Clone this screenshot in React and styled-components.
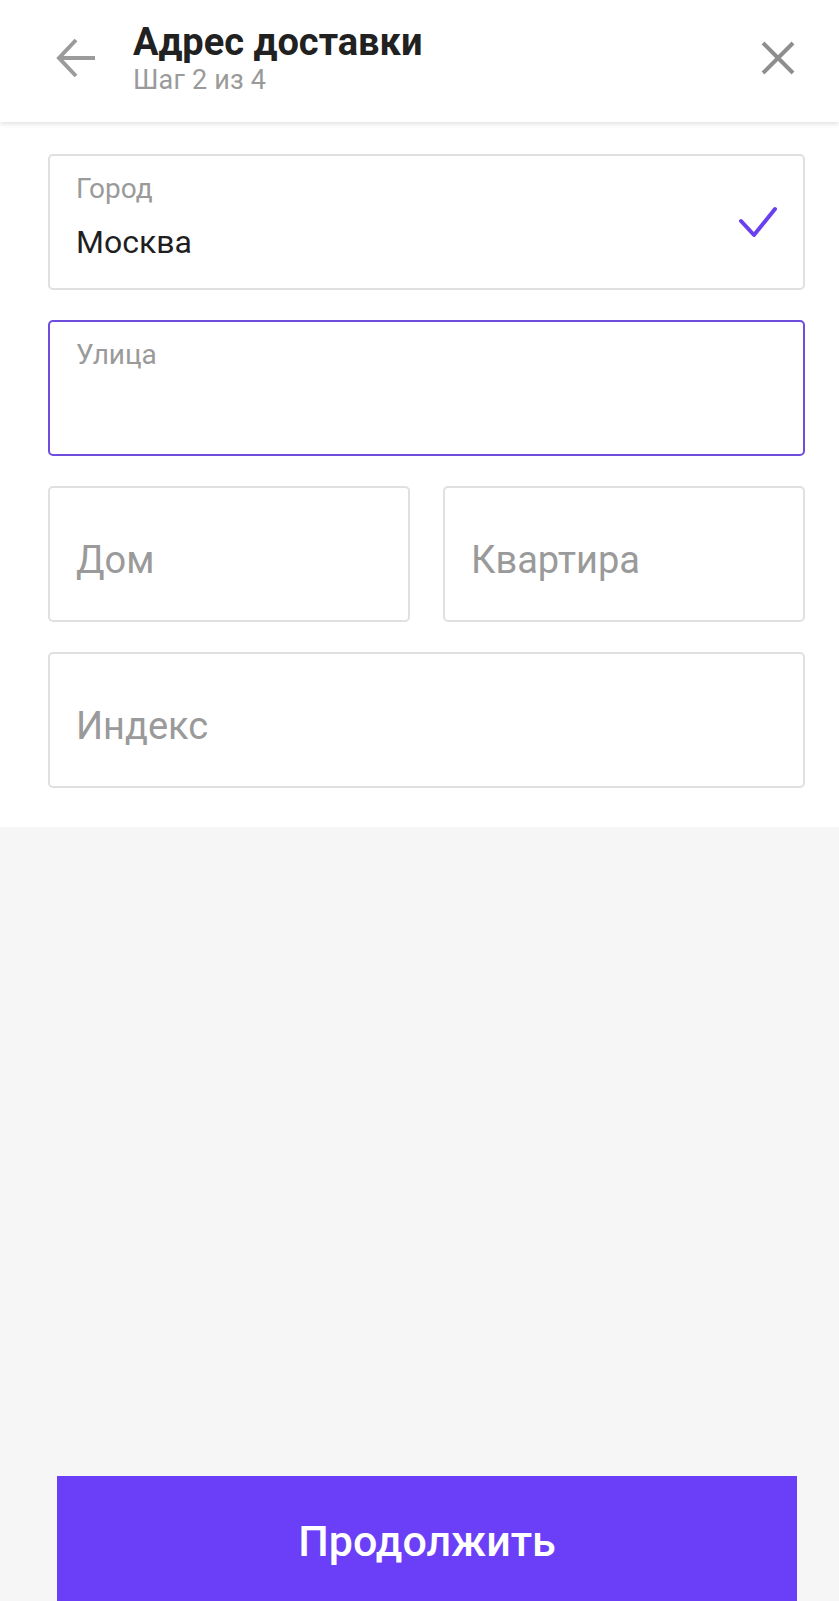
import styled, { createGlobalStyle } from "styled-components";

const GlobalStyle = createGlobalStyle`
  body {
    margin: 0;
    background: #f6f6f6;
    font-family: Roboto, "Liberation Sans", sans-serif;
  }
  * { box-sizing: border-box; }
`

const Page = styled.div`
  display: flex;
  flex-direction: column;
  min-height: 100vh;
  background: #f6f6f6;
`
const Header = styled.header`
  position: relative;
  z-index: 1;
  height: 122px;
  display: flex;
  align-items: flex-start;
  background: #fff;
  box-shadow: 0 2px 5px rgba(0, 0, 0, 0.12);
`
const IconButton = styled.button`
  border: none;
  background: none;
  padding: 0;
  display: flex;
  align-items: center;
  justify-content: center;
  width: ${p => p.$size}px;
  height: ${p => p.$size}px;
  margin: ${p => p.$margin};
  cursor: pointer;
`
const Titles = styled.div`
  flex: 1;
  padding-top: 20px;
  margin-left: 37px;
`
const Title = styled.h1`
  margin: 0;
  font-size: 38px;
  line-height: 44px;
  font-weight: 700;
  color: #212121;
`
const Subtitle = styled.div`
  font-size: 27px;
  line-height: 32px;
  letter-spacing: 0.2px;
  color: #9a9a9a;
`
const Form = styled.section`
  background: #fff;
  padding: 32px 34px 39px 48px;
  display: grid;
  grid-template-columns: 1fr 1fr;
  gap: 30px 33px;
`
const Field = styled.label`
  grid-column: ${p => (p.$wide ? "1 / 3" : "auto")};
  height: 136px;
  border: 2px solid ${p => (p.$focused ? "#6f4ddc" : "#e0e0e0")};
  border-radius: 5px;
  padding: 0 26px 0 26px;
  display: flex;
  align-items: ${p => (p.$empty ? "center" : "flex-start")};
  background: #fff;
`
const FieldBody = styled.div`
  flex: 1;
  padding-top: ${p => (p.$empty ? "12px" : "16px")};
`
const Label = styled.div`
  font-size: 28px;
  line-height: 34px;
  color: #9a9a9a;
`
const Value = styled.div`
  margin-top: 17px;
  font-size: 32px;
  line-height: 38px;
  color: #1f1f1f;
`
const Placeholder = styled.div`
  font-size: 38px;
  line-height: 44px;
  color: #9a9a9a;
`
const Check = styled.span`
  align-self: center;
  display: flex;
`
const Footer = styled.div`
  margin-top: auto;
  padding: 0 42px 0 57px;
`
const SubmitButton = styled.button`
  width: 100%;
  height: 125px;
  border: none;
  padding: 4px 0 0;
  background: #6b3ef8;
  color: #fff;
  font-family: Roboto, "Liberation Sans", sans-serif;
  font-size: 43px;
  font-weight: 500;
  cursor: pointer;
`

function BackIcon() {
  return (
    <svg width="40" height="40" viewBox="0 0 40 40" fill="none" stroke="#9b9b9b" strokeWidth="4">
      <path d="M39 20H4" />
      <path d="M20 2L3 20l17 18" />
    </svg>
  )
}

function CloseIcon() {
  return (
    <svg width="34" height="34" viewBox="0 0 34 34" fill="none" stroke="#8e8e8e" strokeWidth="4">
      <path d="M2 2l30 30M32 2L2 32" />
    </svg>
  )
}

function CheckIcon() {
  return (
    <svg width="38" height="32" viewBox="0 0 38 32" fill="none" stroke="#6a3ff0" strokeWidth="4" strokeLinecap="round" strokeLinejoin="round">
      <path d="M2 15l13 14L36 3" />
    </svg>
  )
}

const fields = [
  { id: "city", label: "Город", value: "Москва", wide: true, done: true },
  { id: "street", label: "Улица", value: "", wide: true, focused: true },
  { id: "house", placeholder: "Дом" },
  { id: "flat", placeholder: "Квартира" },
  { id: "zip", placeholder: "Индекс", wide: true },
]

export default function App() {
  return (
    <>
      <GlobalStyle />
      <Page>
        <Header>
          <IconButton $size={40} $margin="38px 0 0 56px"><BackIcon /></IconButton>
          <Titles>
            <Title>Адрес доставки</Title>
            <Subtitle>Шаг 2 из 4</Subtitle>
          </Titles>
          <IconButton $size={34} $margin="41px 44px 0 0"><CloseIcon /></IconButton>
        </Header>
        <Form>
          {fields.map(f => {
            const empty = !f.label
            return (
              <Field key={f.id} $wide={f.wide} $focused={f.focused} $empty={empty}>
                <FieldBody $empty={empty}>
                  {empty ? (
                    <Placeholder>{f.placeholder}</Placeholder>
                  ) : (
                    <>
                      <Label>{f.label}</Label>
                      {f.value && <Value>{f.value}</Value>}
                    </>
                  )}
                </FieldBody>
                {f.done && <Check><CheckIcon /></Check>}
              </Field>
            )
          })}
        </Form>
        <Footer>
          <SubmitButton>Продолжить</SubmitButton>
        </Footer>
      </Page>
    </>
  )
}
